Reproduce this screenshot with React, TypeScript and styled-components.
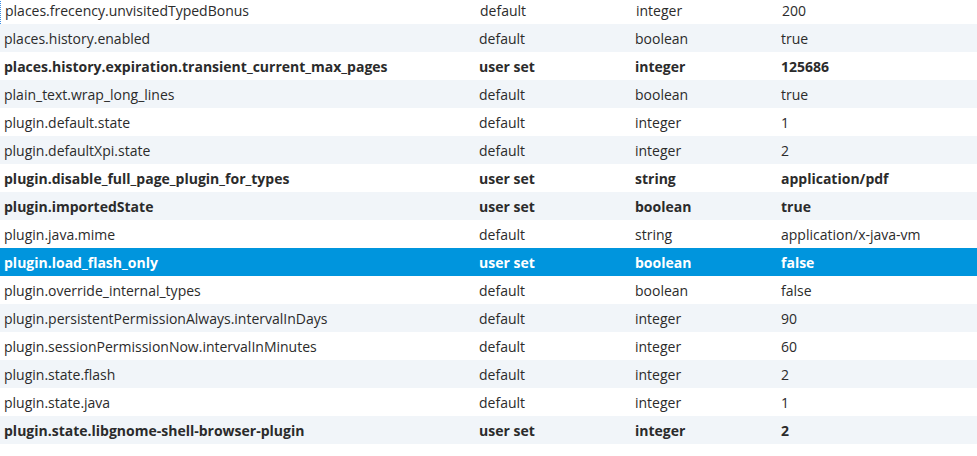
import React from "react";
import styled, { createGlobalStyle } from "styled-components";

const Global = createGlobalStyle`
  html, body { margin: 0; padding: 0; background: #fff; overflow: hidden; }
  body { font-family: "Open Sans", "Liberation Sans", sans-serif; font-size: 14px; color: #2b2b2b; }
`;

const Table = styled.div`
  display: flex;
  flex-direction: column;
  margin-top: -4px;
`;

const Row = styled.div<{ $alt: boolean; $sel: boolean; $bold: boolean; $focus: boolean }>`
  display: grid;
  grid-template-columns: 475px 156px 146px 1fr;
  height: 28px;
  align-items: center;
  padding-left: 4px;
  box-sizing: border-box;
  background: ${p => (p.$sel ? "#0095dd" : p.$alt ? "#f1f5f9" : "#fff")};
  color: ${p => (p.$sel ? "#fff" : "#2b2b2b")};
  font-weight: ${p => (p.$bold ? 700 : 400)};
  border-left: ${p => (p.$focus ? "1px dotted #3a8ee6" : "none")};
  white-space: nowrap;
`;

const rows: [string, string, string, string][] = [
  ["places.frecency.unvisitedTypedBonus", "default", "integer", "200"],
  ["places.history.enabled", "default", "boolean", "true"],
  ["places.history.expiration.transient_current_max_pages", "user set", "integer", "125686"],
  ["plain_text.wrap_long_lines", "default", "boolean", "true"],
  ["plugin.default.state", "default", "integer", "1"],
  ["plugin.defaultXpi.state", "default", "integer", "2"],
  ["plugin.disable_full_page_plugin_for_types", "user set", "string", "application/pdf"],
  ["plugin.importedState", "user set", "boolean", "true"],
  ["plugin.java.mime", "default", "string", "application/x-java-vm"],
  ["plugin.load_flash_only", "user set", "boolean", "false"],
  ["plugin.override_internal_types", "default", "boolean", "false"],
  ["plugin.persistentPermissionAlways.intervalInDays", "default", "integer", "90"],
  ["plugin.sessionPermissionNow.intervalInMinutes", "default", "integer", "60"],
  ["plugin.state.flash", "default", "integer", "2"],
  ["plugin.state.java", "default", "integer", "1"],
  ["plugin.state.libgnome-shell-browser-plugin", "user set", "integer", "2"],
];

export default function App() {
  return (
    <>
      <Global />
      <Table>
        {rows.map((r, i) => (
          <Row key={i} $alt={i % 2 === 1} $sel={i === 9} $bold={r[1] === "user set"} $focus={i === 0}>
            <span>{r[0]}</span>
            <span>{r[1]}</span>
            <span>{r[2]}</span>
            <span>{r[3]}</span>
          </Row>
        ))}
      </Table>
    </>
  );
}
